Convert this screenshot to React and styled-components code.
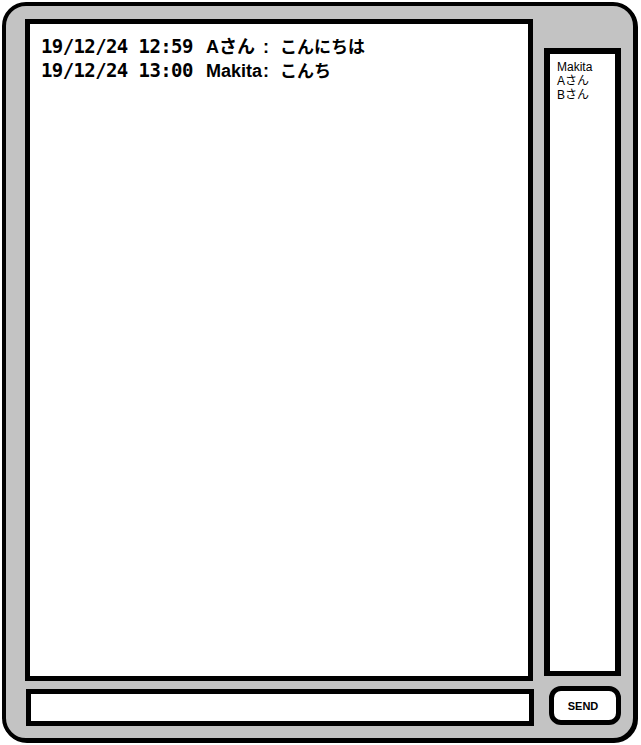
import React from 'react';
import styled, { createGlobalStyle } from 'styled-components';

const GlobalStyle = createGlobalStyle`
  body {
    margin: 0;
    padding: 2px;
    background: #fff;
    font-family: "Liberation Sans", "Noto Sans CJK JP", sans-serif;
  }
`;

const Frame = styled.div`
  box-sizing: border-box;
  width: 635px;
  height: 740px;
  padding: 13px 12px 13px 19px;
  background: #c3c3c3;
  border: 4px solid #000;
  border-radius: 24px;
  box-shadow: 1px 1px 0 #000;
  display: grid;
  grid-template-columns: 508px 77px;
  grid-template-rows: 662px 39px;
  column-gap: 11px;
  row-gap: 5px;
`;

const Log = styled.div`
  box-sizing: border-box;
  background: #fff;
  border: 5px solid #000;
  padding: 10px 0 0 11px;
`;

const Line = styled.div`
  display: flex;
  align-items: baseline;
  height: 24px;
  line-height: 24px;
  font-weight: bold;
  color: #000;
  white-space: nowrap;
`;

const Time = styled.span`
  width: 165px;
  flex-shrink: 0;
  font-family: "DejaVu Sans Mono", monospace;
  font-size: 19px;
  letter-spacing: -0.6px;
`;

const NameCell = styled.span`
  width: 74px;
  flex-shrink: 0;
  display: flex;
  align-items: baseline;
`;

const Name = styled.span`
  min-width: 57px;
  font-size: 18px;
`;

const Colon = styled.span`
  font-size: 18px;
`;

const Message = styled.span`
  font-family: "Noto Sans CJK JP", sans-serif;
  font-size: 17px;
`;

const Users = styled.ul`
  box-sizing: border-box;
  margin: 29px 0 5px;
  padding: 6px 0 0 7px;
  list-style: none;
  background: #fff;
  border: 6px solid #000;
  border-bottom-width: 5px;
`;

const User = styled.li`
  font-size: 12px;
  line-height: 14px;
  color: #000;
`;

const Input = styled.input`
  box-sizing: border-box;
  margin: 3px 0 0 1px;
  width: 508px;
  height: 37px;
  border: 5px solid #000;
  background: #fff;
  outline: none;
`;

const SendButton = styled.button`
  box-sizing: border-box;
  margin-left: 5px;
  width: 72px;
  height: 39px;
  border: 5px solid #000;
  border-radius: 12px;
  background: #fff;
  font-family: "Liberation Sans", sans-serif;
  font-weight: bold;
  font-size: 11px;
  color: #000;
  padding: 0 4px 0 0;
`;

const messages = [
  { time: '19/12/24 12:59', name: 'Aさん', text: 'こんにちは' },
  { time: '19/12/24 13:00', name: 'Makita', text: 'こんち' },
];

const users = ['Makita', 'Aさん', 'Bさん'];

export default function App() {
  return (
    <>
      <GlobalStyle />
      <Frame>
        <Log>
          {messages.map((m, i) => (
            <Line key={i}>
              <Time>{m.time}</Time>
              <NameCell>
                <Name>{m.name}</Name>
                <Colon>:</Colon>
              </NameCell>
              <Message>{m.text}</Message>
            </Line>
          ))}
        </Log>
        <Users>
          {users.map(u => (
            <User key={u}>{u}</User>
          ))}
        </Users>
        <Input type="text" />
        <SendButton>SEND</SendButton>
      </Frame>
    </>
  );
}
